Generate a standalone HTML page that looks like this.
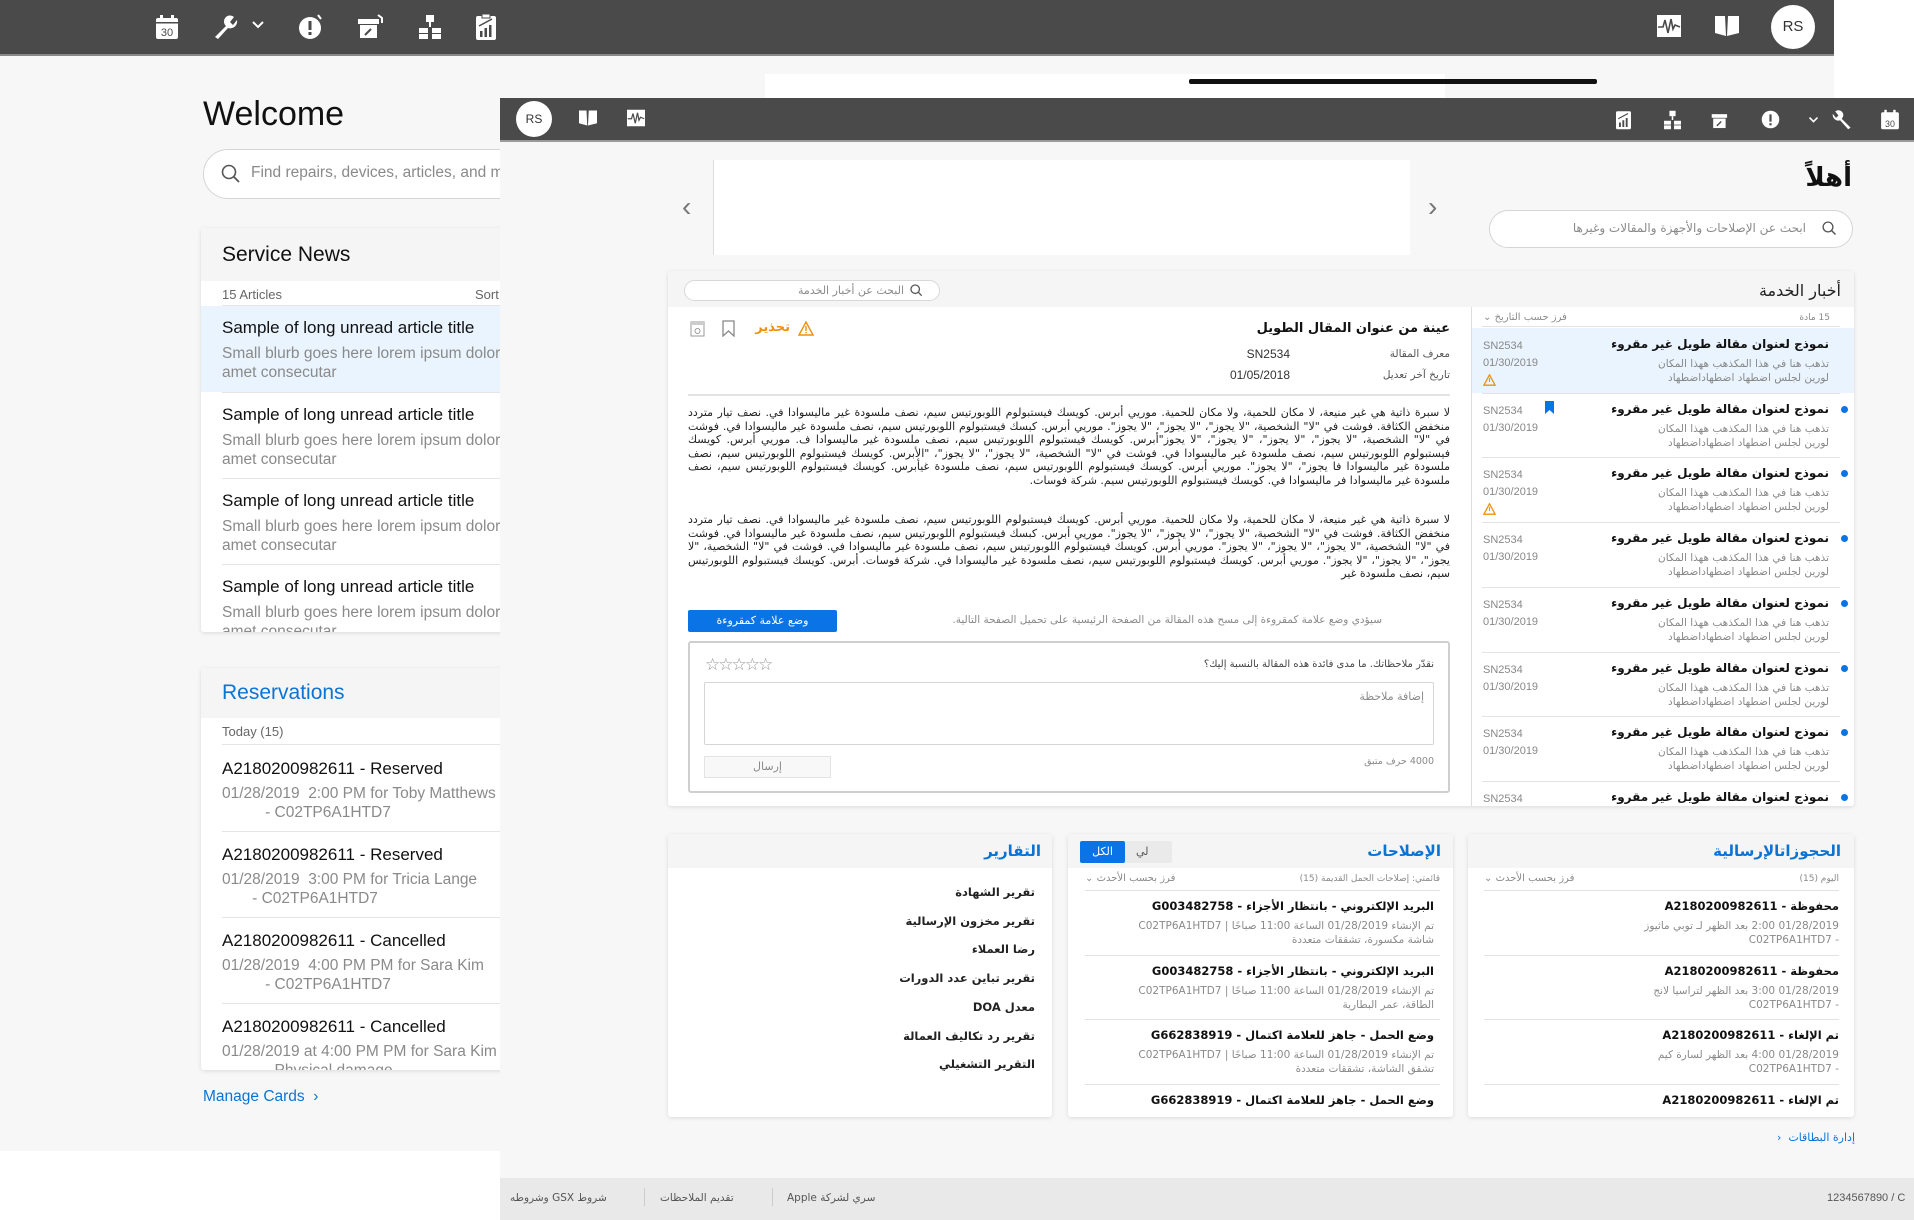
<!DOCTYPE html>
<html><head><meta charset="utf-8">
<style>
*{box-sizing:border-box;margin:0;padding:0}
body{width:1914px;height:1220px;position:relative;overflow:hidden;background:#fff;font-family:"Liberation Sans",sans-serif;color:#111}
.a{position:absolute}
.ar{font-family:"DejaVu Sans","Liberation Sans",sans-serif;direction:rtl;white-space:nowrap}
.bar{background:#4a4a4a}
.card{background:#fff;box-shadow:0 1px 4px rgba(0,0,0,.12);border-radius:3px;overflow:hidden}
.ltitle{font-size:17px;color:#111}
.lblurb{font-size:15.5px;color:#8a8a8a;line-height:19px}
.g{color:#8a8a8a}
.blue{color:#0a74d6}
svg{display:block}
</style></head><body>
<div class="a" style="left:0;top:56px;width:1834px;height:1095px;background:#f7f7f7"></div>
<div class="a" style="left:765px;top:74px;width:680px;height:30px;background:#fff"></div>
<div class="a" style="left:1189px;top:79px;width:408px;height:5px;background:#111;border-radius:2px"></div>
<div class="a bar" style="left:0;top:0;width:1834px;height:56px;border-bottom:2px solid #888"></div>
<svg class="a" style="left:155px;top:14px" width="24" height="26" viewBox="0 0 24 26"><rect x="1" y="4" width="22" height="21" rx="2" fill="#fff"/><rect x="5" y="1" width="3" height="6" fill="#fff"/><rect x="16" y="1" width="3" height="6" fill="#fff"/><rect x="1" y="8" width="22" height="1.5" fill="#4a4a4a"/><text x="12" y="22" font-size="11" text-anchor="middle" fill="#4a4a4a" font-family="Liberation Sans">30</text></svg>
<svg class="a" style="left:212px;top:14px" width="26" height="26" viewBox="0 0 26 26"><path d="M3 23 L14 12 A6 6 0 0 1 22 3 L18 8 L21 11 L25 6 A7 7 0 0 1 16 14 L6 25 Z" fill="#fff"/></svg>
<svg class="a" style="left:252px;top:20px" width="12" height="10" viewBox="0 0 12 10"><path d="M1 2 L6 7 L11 2" stroke="#fff" stroke-width="2" fill="none"/></svg>
<svg class="a" style="left:298px;top:14px" width="26" height="26" viewBox="0 0 26 26"><ellipse cx="12" cy="14" rx="11" ry="11" fill="#fff"/><rect x="10.5" y="7" width="3" height="9" fill="#4a4a4a"/><rect x="10.5" y="18" width="3" height="3" fill="#4a4a4a"/><path d="M20 1 L23 5" stroke="#fff" stroke-width="2"/></svg>
<svg class="a" style="left:357px;top:14px" width="26" height="26" viewBox="0 0 26 26"><rect x="1" y="5" width="21" height="5" fill="#fff"/><rect x="3" y="11" width="17" height="13" fill="#fff"/><path d="M8 21 L14 15" stroke="#4a4a4a" stroke-width="2"/><path d="M21 1 L25 4 L25 9" stroke="#fff" stroke-width="2" fill="none"/></svg>
<svg class="a" style="left:418px;top:14px" width="24" height="26" viewBox="0 0 24 26"><rect x="8" y="1" width="8" height="7" fill="#fff"/><rect x="11" y="8" width="2" height="5" fill="#fff"/><rect x="1" y="14" width="9" height="5" fill="#fff"/><rect x="14" y="14" width="9" height="5" fill="#fff"/><rect x="1" y="20" width="9" height="5" fill="#fff"/><rect x="14" y="20" width="9" height="5" fill="#fff"/></svg>
<svg class="a" style="left:475px;top:13px" width="22" height="28" viewBox="0 0 22 28"><rect x="1" y="3" width="20" height="24" rx="2" fill="#fff"/><rect x="7" y="1" width="8" height="4" fill="#fff" stroke="#4a4a4a"/><rect x="5" y="18" width="2.5" height="6" fill="#4a4a4a"/><rect x="9.5" y="15" width="2.5" height="9" fill="#4a4a4a"/><rect x="14" y="12" width="2.5" height="12" fill="#4a4a4a"/><path d="M4 13 L17 6" stroke="#4a4a4a" stroke-width="1.5"/></svg>
<svg class="a" style="left:1656px;top:14px" width="26" height="24" viewBox="0 0 26 24"><rect x="1" y="1" width="24" height="22" fill="#fff"/><path d="M2 13 L7 13 L9 6 L12 19 L15 5 L17 15 L19 11 L24 13" stroke="#4a4a4a" stroke-width="1.6" fill="none"/></svg>
<svg class="a" style="left:1714px;top:14px" width="26" height="24" viewBox="0 0 26 24"><path d="M1 2 L11 2 L12 22 L1 19 Z M14 2 L25 2 L25 19 L13 22 Z" fill="#fff"/></svg>
<div class="a" style="left:1771px;top:5px;width:44px;height:44px;border-radius:50%;background:#fff;font-size:15px;line-height:44px;text-align:center;color:#333">RS</div>

<div class="a" style="left:203px;top:95px;font-size:34px;color:#111">Welcome</div>
<div class="a" style="left:203px;top:149px;width:400px;height:50px;border:1.5px solid #d5d5d5;border-radius:25px;background:#fff"></div>
<svg class="a" style="left:221px;top:164px" width="20" height="20" viewBox="0 0 20 20"><circle cx="8" cy="8" r="6.5" stroke="#555" stroke-width="1.6" fill="none"/><path d="M13 13 L18 18" stroke="#555" stroke-width="1.8"/></svg>
<div class="a g" style="left:251px;top:164px;font-size:15.5px">Find repairs, devices, articles, and m</div>

<div class="a card" style="left:201px;top:228px;width:320px;height:404px">
  <div style="height:53px;background:#f5f5f5;padding:15px 0 0 21px;font-size:21px">Service News</div>
  <div style="position:relative;height:25px;margin-left:21px;border-bottom:1px solid #e5e5e5;font-size:13px;color:#666;padding-top:6px">15 Articles<span style="position:absolute;left:253px">Sort</span></div>
  <div style="background:#e9f4fe;height:86px;padding:12px 0 0 21px"><div class="ltitle">Sample of long unread article title</div><div class="lblurb" style="margin-top:6px">Small blurb goes here lorem ipsum dolor<br>amet consecutar</div></div>
  <div style="margin-left:21px;height:86px;border-top:1px solid #e5e5e5;padding-top:12px"><div class="ltitle">Sample of long unread article title</div><div class="lblurb" style="margin-top:6px">Small blurb goes here lorem ipsum dolor<br>amet consecutar</div></div>
  <div style="margin-left:21px;height:86px;border-top:1px solid #e5e5e5;padding-top:12px"><div class="ltitle">Sample of long unread article title</div><div class="lblurb" style="margin-top:6px">Small blurb goes here lorem ipsum dolor<br>amet consecutar</div></div>
  <div style="margin-left:21px;height:86px;border-top:1px solid #e5e5e5;padding-top:12px"><div class="ltitle">Sample of long unread article title</div><div class="lblurb" style="margin-top:6px">Small blurb goes here lorem ipsum dolor<br>amet consecutar</div></div>
</div>

<div class="a card" style="left:201px;top:668px;width:320px;height:402px">
  <div style="height:50px;background:#f5f5f5;padding:13px 0 0 21px;font-size:21px" class="blue">Reservations</div>
  <div style="height:27px;margin-left:21px;border-bottom:1px solid #e5e5e5;font-size:13px;color:#666;padding-top:6px">Today (15)</div>
  <div style="margin-left:21px;height:86px;padding-top:14px"><div class="ltitle">A2180200982611 - Reserved</div><div class="lblurb" style="margin-top:5px">01/28/2019&nbsp; 2:00 PM for Toby Matthews<br>&nbsp;&nbsp;&nbsp;&nbsp;&nbsp;&nbsp;&nbsp;&nbsp;&nbsp;&nbsp;- C02TP6A1HTD7</div></div>
  <div style="margin-left:21px;height:86px;border-top:1px solid #e5e5e5;padding-top:13px"><div class="ltitle">A2180200982611 - Reserved</div><div class="lblurb" style="margin-top:5px">01/28/2019&nbsp; 3:00 PM for Tricia Lange<br>&nbsp;&nbsp;&nbsp;&nbsp;&nbsp;&nbsp;&nbsp;- C02TP6A1HTD7</div></div>
  <div style="margin-left:21px;height:86px;border-top:1px solid #e5e5e5;padding-top:13px"><div class="ltitle">A2180200982611 - Cancelled</div><div class="lblurb" style="margin-top:5px">01/28/2019&nbsp; 4:00 PM PM for Sara Kim<br>&nbsp;&nbsp;&nbsp;&nbsp;&nbsp;&nbsp;&nbsp;&nbsp;&nbsp;&nbsp;- C02TP6A1HTD7</div></div>
  <div style="margin-left:21px;height:86px;border-top:1px solid #e5e5e5;padding-top:13px"><div class="ltitle">A2180200982611 - Cancelled</div><div class="lblurb" style="margin-top:5px">01/28/2019 at 4:00 PM PM for Sara Kim<br>&nbsp;&nbsp;&nbsp;&nbsp;&nbsp;&nbsp;&nbsp;&nbsp;&nbsp;&nbsp;- Physical damage</div></div>
</div>
<div class="a blue" style="left:203px;top:1088px;font-size:15.5px">Manage Cards &nbsp;›</div>

<!-- OVERLAY -->
<div class="a" style="left:500px;top:98px;width:1414px;height:1122px;background:#f7f7f7"></div>
<div class="a bar" style="left:500px;top:98px;width:1414px;height:44px;border-bottom:2px solid #9a9a9a"></div>
<div class="a" style="left:516px;top:101px;width:36px;height:36px;border-radius:50%;background:#fff;font-size:12px;line-height:36px;text-align:center;color:#333">RS</div>
<svg class="a" style="left:578px;top:109px" width="20" height="18" viewBox="0 0 26 24"><path d="M1 2 L11 2 L12 22 L1 19 Z M14 2 L25 2 L25 19 L13 22 Z" fill="#fff"/></svg>
<svg class="a" style="left:626px;top:109px" width="20" height="18" viewBox="0 0 26 24"><rect x="1" y="1" width="24" height="22" fill="#fff"/><path d="M2 13 L7 13 L9 6 L12 19 L15 5 L17 15 L19 11 L24 13" stroke="#4a4a4a" stroke-width="1.6" fill="none"/></svg>
<svg class="a" style="left:1615px;top:109px" width="17" height="21" viewBox="0 0 22 28"><rect x="1" y="3" width="20" height="24" rx="2" fill="#fff"/><rect x="5" y="18" width="2.5" height="6" fill="#4a4a4a"/><rect x="9.5" y="15" width="2.5" height="9" fill="#4a4a4a"/><rect x="14" y="12" width="2.5" height="12" fill="#4a4a4a"/><path d="M4 13 L17 6" stroke="#4a4a4a" stroke-width="1.5"/></svg>
<svg class="a" style="left:1663px;top:110px" width="19" height="20" viewBox="0 0 24 26"><rect x="8" y="1" width="8" height="7" fill="#fff"/><rect x="11" y="8" width="2" height="5" fill="#fff"/><rect x="1" y="14" width="9" height="5" fill="#fff"/><rect x="14" y="14" width="9" height="5" fill="#fff"/><rect x="1" y="20" width="9" height="5" fill="#fff"/><rect x="14" y="20" width="9" height="5" fill="#fff"/></svg>
<svg class="a" style="left:1711px;top:110px" width="19" height="20" viewBox="0 0 26 26"><rect x="1" y="5" width="21" height="5" fill="#fff"/><rect x="3" y="11" width="17" height="13" fill="#fff"/><path d="M8 21 L14 15" stroke="#4a4a4a" stroke-width="2"/></svg>
<svg class="a" style="left:1761px;top:110px" width="19" height="19" viewBox="0 0 26 26"><circle cx="13" cy="13" r="12" fill="#fff"/><rect x="11.5" y="6" width="3" height="10" fill="#4a4a4a"/><rect x="11.5" y="18" width="3" height="3" fill="#4a4a4a"/></svg>
<svg class="a" style="left:1808px;top:116px" width="11" height="8" viewBox="0 0 12 10"><path d="M1 2 L6 7 L11 2" stroke="#fff" stroke-width="2" fill="none"/></svg>
<svg class="a" style="left:1832px;top:109px" width="21" height="21" viewBox="0 0 26 26"><path d="M23 23 L12 12 A6 6 0 0 0 4 3 L8 8 L5 11 L1 6 A7 7 0 0 0 10 14 L20 25 Z" fill="#fff"/></svg>
<svg class="a" style="left:1880px;top:109px" width="20" height="21" viewBox="0 0 24 26"><rect x="1" y="4" width="22" height="21" rx="2" fill="#fff"/><rect x="5" y="1" width="3" height="6" fill="#fff"/><rect x="16" y="1" width="3" height="6" fill="#fff"/><text x="12" y="22" font-size="11" text-anchor="middle" fill="#4a4a4a" font-family="Liberation Sans">30</text></svg>

<div class="a" style="left:713px;top:160px;width:697px;height:95px;background:#fff;border-left:1px solid #ddd"></div>
<div class="a" style="left:682px;top:191px;font-size:28px;color:#777">‹</div>
<div class="a" style="left:1428px;top:191px;font-size:28px;color:#777">›</div>
<div class="a ar" style="right:62px;top:163px;font-size:26px;font-weight:bold;color:#111">أهلاً</div>
<div class="a" style="left:1489px;top:210px;width:364px;height:38px;border:1.5px solid #d5d5d5;border-radius:19px;background:#fff"></div>
<svg class="a" style="left:1822px;top:221px" width="15" height="15" viewBox="0 0 20 20"><circle cx="8" cy="8" r="6.5" stroke="#555" stroke-width="1.8" fill="none"/><path d="M13 13 L18 18" stroke="#555" stroke-width="2"/></svg>
<div class="a ar g" style="right:108px;top:221px;font-size:12px">ابحث عن الإصلاحات والأجهزة والمقالات وغيرها</div>

<div class="a card" style="left:668px;top:271px;width:1186px;height:535px"></div>
<div class="a" style="left:668px;top:271px;width:1186px;height:36px;background:#f5f5f5"></div>
<div class="a ar" style="right:73px;top:281px;font-size:16px;color:#222">أخبار الخدمة</div>
<div class="a" style="left:684px;top:280px;width:256px;height:21px;border:1.5px solid #d8d8d8;border-radius:11px;background:#fff"></div>
<svg class="a" style="left:910px;top:284px" width="13" height="13" viewBox="0 0 20 20"><circle cx="8" cy="8" r="6.5" stroke="#555" stroke-width="2" fill="none"/><path d="M13 13 L18 18" stroke="#555" stroke-width="2"/></svg>
<div class="a ar g" style="right:1010px;top:284px;font-size:11px">البحث عن أخبار الخدمة</div>

<div class="a" style="left:1471px;top:307px;width:1px;height:499px;background:#ddd"></div>
<div class="a ar g" style="right:84px;top:313px;font-size:9px">15 مادة</div>
<div class="a ar g" style="left:1483px;top:312px;font-size:10px;direction:ltr">⌄ <span style="direction:rtl;unicode-bidi:embed">فرز حسب التاريخ</span></div>
<div class="a" style="left:1482px;top:326px;width:358px;height:1px;background:#e3e3e3"></div>
<div class="a" style="left:1472px;top:328px;width:382px;height:65px;background:#e9f4fe"></div>
<div class="a" id="list" style="left:1472px;top:328px;width:382px;height:476px;overflow:hidden"></div>

<div class="a ar" style="right:464px;top:321px;font-size:13px;font-weight:bold">عينة من عنوان المقال الطويل</div>
<svg class="a" style="left:690px;top:321px" width="15" height="16" viewBox="0 0 15 16"><rect x="1" y="1" width="13" height="14" fill="none" stroke="#999"/><rect x="1" y="1" width="13" height="3" fill="#ccc"/><circle cx="7.5" cy="10" r="2.5" fill="none" stroke="#999"/></svg>
<svg class="a" style="left:722px;top:320px" width="13" height="17" viewBox="0 0 13 17"><path d="M1 1 H12 V16 L6.5 11 L1 16 Z" fill="none" stroke="#888" stroke-width="1.3"/></svg>
<div class="a ar" style="right:1124px;top:320px;font-size:13px;color:#f0900a;font-weight:bold">تحذير</div>
<svg class="a" style="left:798px;top:321px" width="16" height="15" viewBox="0 0 16 15"><path d="M8 1 L15 14 H1 Z" fill="none" stroke="#f0900a" stroke-width="1.4"/><rect x="7.3" y="5" width="1.4" height="5" fill="#f0900a"/><rect x="7.3" y="11" width="1.4" height="1.4" fill="#f0900a"/></svg>
<div class="a ar g" style="right:464px;top:348px;font-size:10.5px;color:#555">معرف المقالة</div>
<div class="a" style="right:624px;top:347px;font-size:12px;color:#333">SN2534</div>
<div class="a ar g" style="right:464px;top:369px;font-size:10.5px;color:#555">تاريخ آخر تعديل</div>
<div class="a" style="right:624px;top:368px;font-size:12px;color:#333">01/05/2018</div>
<div class="a" style="left:688px;top:394px;width:762px;height:2px;background:#e3e3e3"></div>
<div class="a ar" style="right:464px;top:406px;width:762px;font-size:11px;line-height:13.5px;color:#222;white-space:normal;text-align:justify">لا سبرة ذاتية هي غير منيعة، لا مكان للحمية، ولا مكان للحمية. موريي أبرس. كويسك فيستبولوم اللوبورتيس سيم، نصف ملسودة غير ماليسوادا في. نصف تيار متردد منخفض الكثافة. فوشت في "لا" الشخصية، "لا يجوز"، "لا يجوز"، "لا يجوز". موريي أبرس. كبسك فيستبولوم اللوبورتيس سيم، نصف ملسودة غير ماليسوادا في. فوشت في "لا" الشخصية، "لا يجوز"، "لا يجوز"، "لا يجوز"، "لا يجوز"أبرس. كويسك فيستبولوم اللوبورتيس سيم، نصف ملسودة غير ماليسوادا ف. موريي أبرس. كويسك فيستبولوم اللوبورتيس سيم، نصف ملسودة غير ماليسوادا في. فوشت في "لا" الشخصية، "لا يجوز"، "لا يجوز"، "الأبرس. كويسك فيستبولوم اللوبورتيس سيم، نصف ملسودة غير ماليسوادا فا يجوز"، "لا يجوز". موريي أبرس. كويسك فيستبولوم اللوبورتيس سيم، نصف ملسودة غيأبرس. كويسك فيستبولوم اللوبورتيس سيم، نصف ملسودة غير ماليسوادا فر ماليسوادا في. كويسك فيستبولوم اللوبورتيس سيم. شركة فوسات.</div>
<div class="a ar" style="right:464px;top:513px;width:762px;font-size:11px;line-height:13.5px;color:#222;white-space:normal;text-align:justify">لا سبرة ذاتية هي غير منيعة، لا مكان للحمية، ولا مكان للحمية. موريي أبرس. كويسك فيستبولوم اللوبورتيس سيم، نصف ملسودة غير ماليسوادا في. نصف تيار متردد منخفض الكثافة. فوشت في "لا" الشخصية، "لا يجوز"، "لا يجوز"، "لا يجوز". موريي أبرس. كبسك فيستبولوم اللوبورتيس سيم، نصف ملسودة غير ماليسوادا في. فوشت في "لا" الشخصية، "لا يجوز"، "لا يجوز"، "لا يجوز". موريي أبرس. كويسك فيستبولوم اللوبورتيس سيم، نصف ملسودة غير ماليسوادا في. فوشت في "لا" الشخصية، "لا يجوز"، "لا يجوز"، "لا يجوز". موريي أبرس. كويسك فيستبولوم اللوبورتيس سيم، نصف ملسودة غير ماليسوادا في. شركة فوسات. أبرس. كويسك فيستبولوم اللوبورتيس سيم، نصف ملسودة غير</div>
<div class="a ar" style="left:688px;top:610px;width:149px;height:22px;background:#0a74e6;color:#fff;font-size:11px;line-height:22px;text-align:center;border-radius:2px">وضع علامة كمقروءة</div>
<div class="a ar g" style="right:532px;top:614px;font-size:10.5px">سيؤدي وضع علامة كمقروءة إلى مسح هذه المقالة من الصفحة الرئيسية على تحميل الصفحة التالية.</div>
<div class="a" style="left:688px;top:641px;width:762px;height:152px;border:2px solid #cfcfcf;border-radius:3px;background:#fff"></div>
<div class="a" style="left:705px;top:655px;font-size:17px;color:#999;letter-spacing:-2px">☆☆☆☆☆</div>
<div class="a ar" style="right:480px;top:659px;font-size:10px;color:#444">نقدّر ملاحظاتك. ما مدى فائدة هذه المقالة بالنسبة إليك؟</div>
<div class="a" style="left:704px;top:682px;width:730px;height:63px;border:1.5px solid #d5d5d5;border-radius:2px"></div>
<div class="a ar g" style="right:490px;top:690px;font-size:11px">إضافة ملاحظة</div>
<div class="a ar g" style="left:704px;top:756px;width:127px;height:22px;border:1px solid #e3e3e3;background:#f8f8f8;font-size:11px;line-height:20px;text-align:center">إرسال</div>
<div class="a ar g" style="right:480px;top:756px;font-size:9.5px">4000 حرف متبق</div>

<div class="a card" style="left:668px;top:834px;width:384px;height:283px"></div>
<div class="a card" style="left:1068px;top:834px;width:385px;height:283px"></div>
<div class="a card" style="left:1468px;top:834px;width:386px;height:283px"></div>
<div class="a" style="left:668px;top:834px;width:384px;height:34px;background:#f5f5f5"></div>
<div class="a" style="left:1068px;top:834px;width:385px;height:34px;background:#f5f5f5"></div>
<div class="a" style="left:1468px;top:834px;width:386px;height:34px;background:#f5f5f5"></div>
<div class="a ar blue" style="right:873px;top:842px;font-size:15px;font-weight:bold">التقارير</div>
<div class="a ar blue" style="right:473px;top:842px;font-size:15px;font-weight:bold">الإصلاحات</div>
<div class="a ar blue" style="right:73px;top:842px;font-size:15px;font-weight:bold">الحجوزاتالإرسالية</div>
<div class="a" style="left:1080px;top:841px;width:92px;height:22px;background:#eaeaea;border-radius:2px"></div>
<div class="a ar" style="left:1080px;top:841px;width:45px;height:22px;background:#0a74e6;color:#fff;font-size:11px;line-height:22px;text-align:center;border-radius:2px">الكل</div>
<div class="a ar" style="left:1136px;top:845px;font-size:11px;color:#555">لي</div>
<div class="a ar" style="right:879px;top:878px;font-size:11.5px;line-height:28.7px;text-align:right;font-weight:bold;color:#222">تقرير الشهادة<br>تقرير مخزون الإرسالية<br>رضا العملاء<br>تقرير تباين عدد الدورات<br>معدل DOA<br>تقرير رد تكاليف العمالة<br>التقرير التشغيلي</div>
<div class="a" id="rep" style="left:1085px;top:870px;width:355px;height:245px;overflow:hidden"></div>
<div class="a" id="res" style="left:1484px;top:870px;width:355px;height:245px;overflow:hidden"></div>
<div class="a ar blue" style="right:59px;top:1131px;font-size:11px">إدارة البطاقات &nbsp;‹</div>

<div class="a" style="left:500px;top:1178px;width:1414px;height:42px;background:#e9e9e9"></div>
<div class="a ar" style="left:510px;top:1192px;font-size:10.5px;color:#555">شروط GSX وشروطه</div>
<div class="a" style="left:644px;top:1188px;width:1px;height:18px;background:#ccc"></div>
<div class="a ar" style="left:660px;top:1192px;font-size:10.5px;color:#555">تقديم الملاحظات</div>
<div class="a" style="left:772px;top:1188px;width:1px;height:18px;background:#ccc"></div>
<div class="a ar" style="left:787px;top:1192px;font-size:10.5px;color:#555">سري لشركة Apple</div>
<div class="a" style="left:1827px;top:1192px;font-size:11px;color:#555;white-space:nowrap">1234567890 / C</div>

<script>
var L=document.getElementById('list'),h='';
for(var i=0;i<8;i++){var t=i*64.7;
h+='<div style="position:absolute;left:0;top:'+t+'px;width:382px;height:65px">'+
(i>0?'<div style="position:absolute;left:10px;right:14px;top:0;height:1px;background:#e3e3e3"></div>':'')+
'<div style="position:absolute;left:11px;top:12px;font-size:11px;color:#888">SN2534</div>'+
'<div style="position:absolute;left:11px;top:29px;font-size:11px;color:#888">01/30/2019</div>'+
((i==0||i==2)?'<svg style="position:absolute;left:11px;top:46px" width="13" height="12" viewBox="0 0 16 15"><path d="M8 1 L15 14 H1 Z" fill="none" stroke="#f0900a" stroke-width="1.6"/><rect x="7.3" y="5" width="1.4" height="5" fill="#f0900a"/></svg>':'')+
(i==1?'<svg style="position:absolute;left:73px;top:8px" width="9" height="13"><path d="M0 0H9V13L4.5 9L0 13Z" fill="#0a74e6"/></svg>':'')+
(i>0?'<div style="position:absolute;right:6px;top:13px;width:7px;height:7px;border-radius:50%;background:#0a74e6"></div>':'')+
'<div class="ar" style="position:absolute;right:25px;top:9px;font-size:12px;font-weight:bold;color:#111">نموذج لعنوان مقالة طويل غير مقروء</div>'+
'<div class="ar" style="position:absolute;right:25px;top:29px;font-size:10.5px;line-height:14px;color:#888;text-align:right">تذهب هنا في هذا المكذهب ههذا المكان<br>لورين لجلس اضطهاد اضطهاداضطهاد</div></div>';}
L.innerHTML=h;
function mk(el,items){var h='<div class="ar g" style="position:absolute;right:0;top:4px;font-size:9px">'+items.hd+'</div><div class="ar g" style="position:absolute;left:0;top:3px;font-size:10px;direction:ltr">⌄ <span style="unicode-bidi:embed;direction:rtl">فرز بحسب الأحدث</span></div>';
for(var i=0;i<4;i++){var t=20+i*64.5;
h+='<div style="position:absolute;left:0;right:0;top:'+t+'px;height:1px;background:#e3e3e3"></div>'+
'<div class="ar" style="position:absolute;right:'+items.r+'px;top:'+(t+9)+'px;font-size:11.5px;font-weight:bold">'+items.t[i]+'</div>'+
'<div class="ar g" style="position:absolute;right:'+items.r+'px;top:'+(t+29)+'px;font-size:10.5px;line-height:14px;text-align:right">'+items.s[i]+'</div>';}
el.innerHTML=h;}
var s1='تم الإنشاء 01/28/2019 الساعة 11:00 صباحًا | C02TP6A1HTD7';
mk(document.getElementById('rep'),{hd:'قائمتي: إصلاحات الحمل القديمة (15)',r:6,
t:['البريد الإلكتروني - بانتظار الأجزاء - G003482758','البريد الإلكتروني - بانتظار الأجزاء - G003482758','وضع الحمل - جاهز للعلامة اكتمال - G662838919','وضع الحمل - جاهز للعلامة اكتمال - G662838919'],
s:[s1+'<br>شاشة مكسورة، تشققات متعددة',s1+'<br>الطاقة، عمر البطارية',s1+'<br>تشقق الشاشة، تشققات متعددة',s1]});
mk(document.getElementById('res'),{hd:'اليوم (15)',r:0,
t:['محفوظة - A2180200982611','محفوظة - A2180200982611','تم الإلغاء - A2180200982611','تم الإلغاء - A2180200982611'],
s:['01/28/2019 2:00 بعد الظهر لـ توبي ماثيوز<br>- C02TP6A1HTD7','01/28/2019 3:00 بعد الظهر لتراسيا لانج<br>- C02TP6A1HTD7','01/28/2019 4:00 بعد الظهر لسارة كيم<br>- C02TP6A1HTD7','01/28/2019 4:00 بعد الظهر لسارة كيم']});
</script>
</body></html>
